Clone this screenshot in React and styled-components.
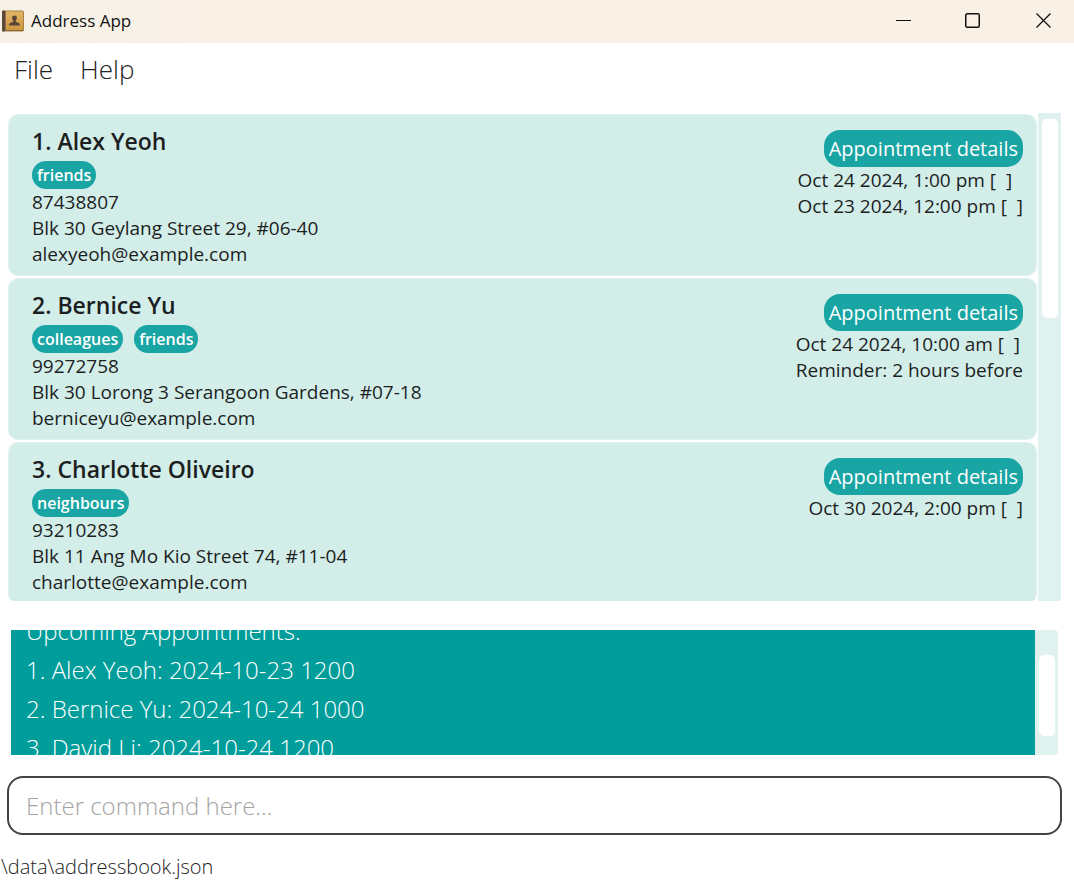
import React, { useLayoutEffect, useRef } from "react";
import styled, { createGlobalStyle } from "styled-components";

const GlobalStyle = createGlobalStyle`
  * { box-sizing: border-box; }
  body {
    margin: 0;
    background: #fff;
    color: #1c1f1f;
    font-family: "Open Sans", "Noto Sans", sans-serif;
  }
`;

const Window = styled.div`
  display: flex;
  flex-direction: column;
  height: 100vh;
  overflow: hidden;
`;

const TitleBar = styled.header`
  display: flex;
  align-items: center;
  flex: none;
  height: 43px;
  padding: 0 0 2px 2px;
  background: linear-gradient(90deg, #f6f2e7, #f9f0e6 200px);
`;

const Title = styled.h1`
  flex: 1;
  margin: 0 0 0 7px;
  font-size: 17px;
  font-weight: 400;
  line-height: 24px;
  color: #111;
`;

const WindowButton = styled.button`
  display: flex;
  align-items: center;
  justify-content: center;
  width: 70px;
  height: 41px;
  padding: 0;
  border: 0;
  background: none;
`;

const WindowControls = styled.div`
  display: flex;
  margin-right: -4px;
`;

const MenuBar = styled.nav`
  display: flex;
  flex: none;
  gap: 27px;
  padding: 7px 14px 0;
  height: 70px;
`;

const MenuButton = styled.button`
  height: 38px;
  padding: 0;
  border: 0;
  background: none;
  color: #222;
  font: 300 26px/38px "Open Sans", "Noto Sans", sans-serif;
`;

const ListPane = styled.main`
  display: flex;
  flex: 1;
  min-height: 0;
  padding: 0 13px 0 8px;
  gap: 1px;
`;

const PersonList = styled.ol`
  flex: 1;
  min-width: 0;
  margin: 0;
  padding: 1px 0 0;
  overflow: hidden;
  list-style: none;
  border-radius: 0 0 6px 6px;
`;

const PersonCard = styled.li`
  display: flex;
  justify-content: space-between;
  height: 162px;
  margin-bottom: 2px;
  padding: 12px 13px 8px 23px;
  border: 1px solid #e0f3f0;
  border-radius: 10px;
  background: #d3ede9;
  font-size: 19px;
  line-height: 26px;
`;

const Details = styled.div`
  display: flex;
  flex-direction: column;
`;

const Name = styled.h2`
  margin: 0 0 6px;
  font-size: 23px;
  font-weight: 600;
  line-height: 28px;
`;

const Tags = styled.div`
  display: flex;
  gap: 11px;
`;

const Tag = styled.span`
  padding: 0 5px;
  border-radius: 14px;
  background: #18a5a3;
  color: #fff;
  font-size: 16px;
  font-weight: 600;
  line-height: 28px;
`;

const Appointments = styled.div`
  display: flex;
  flex-direction: column;
  padding-top: 3px;
`;

const AppointmentButton = styled.button`
  align-self: flex-end;
  height: 37px;
  padding: 0 5px;
  border: 0;
  border-radius: 16px;
  background: #18a5a3;
  color: #fff;
  font: 400 20px/37px "Open Sans", "Noto Sans", sans-serif;
`;

const AppointmentLine = styled.span`
  white-space: pre;
`;

const Track = styled.div`
  flex: none;
  width: 23px;
  padding: ${(p) => p.$offset}px 3px 0 4px;
  border-radius: ${(p) => (p.$rounded ? "0 4px 4px 0" : "0")};
  background: #dff2ef;
`;

const Thumb = styled.div`
  width: 16px;
  height: ${(p) => p.$length}px;
  border-radius: 5px;
  background: #fff;
`;

const ResultPane = styled.section`
  display: flex;
  flex: none;
  height: 125px;
  margin: 29px 16px 0 11px;
`;

const ResultText = styled.div`
  flex: 1;
  min-width: 0;
  padding: 0 15px;
  overflow: hidden;
  background: #009d9b;
  color: #fff;
  font-size: 24px;
  font-weight: 300;
  line-height: 39px;
`;

const ResultLine = styled.p`
  margin: 0;
`;

const CommandInput = styled.input`
  flex: none;
  height: 59px;
  margin: 21px 12px 0 7px;
  padding: 0 17px;
  border: 2px solid #444;
  border-radius: 16px;
  background: #fff;
  color: #222;
  font: 300 24px/36px "Open Sans", "Noto Sans", sans-serif;
  &::placeholder { color: #a4a4a4; opacity: 1; }
`;

const StatusBar = styled.footer`
  flex: none;
  height: 45px;
  padding: 19px 1px 0;
  color: #222;
  font-size: 20px;
  font-weight: 300;
  line-height: 26px;
`;

const people = [
  {
    name: "Alex Yeoh",
    tags: ["friends"],
    phone: "87438807",
    address: "Blk 30 Geylang Street 29, #06-40",
    email: "alexyeoh@example.com",
    appointments: ["Oct 24 2024, 1:00 pm [  ]", "Oct 23 2024, 12:00 pm [  ]"],
  },
  {
    name: "Bernice Yu",
    tags: ["colleagues", "friends"],
    phone: "99272758",
    address: "Blk 30 Lorong 3 Serangoon Gardens, #07-18",
    email: "berniceyu@example.com",
    appointments: ["Oct 24 2024, 10:00 am [  ]", "Reminder: 2 hours before"],
  },
  {
    name: "Charlotte Oliveiro",
    tags: ["neighbours"],
    phone: "93210283",
    address: "Blk 11 Ang Mo Kio Street 74, #11-04",
    email: "charlotte@example.com",
    appointments: ["Oct 30 2024, 2:00 pm [  ]"],
  },
];

const results = [
  "Upcoming Appointments:",
  "1. Alex Yeoh: 2024-10-23 1200",
  "2. Bernice Yu: 2024-10-24 1000",
  "3. David Li: 2024-10-24 1200",
];

function BookIcon() {
  return (
    <svg width="22" height="22" viewBox="0 0 22 22" aria-hidden="true">
      <defs>
        <linearGradient id="cover" x1="0" y1="0" x2="0" y2="1">
          <stop offset="0" stopColor="#e3b565" />
          <stop offset="1" stopColor="#cd9440" />
        </linearGradient>
      </defs>
      <rect x="0.5" y="1" width="21" height="20" rx="1" fill="url(#cover)" stroke="#a98249" />
      <rect x="0" y="0.5" width="3" height="21" rx="1" fill="#5f4a3a" />
      <rect x="3" y="1" width="1" height="20" fill="#8d7153" />
      <path d="M4 20.5h17.5" stroke="#8b6a3c" />
      <path
        d="M12.5 5.500c-1.500 0-2.400 1-2.400 2.400 0 1.200.6 2 1.200 2.600v1.500c-1.300.3-4.300.5-4.300 3.500h11c0-3-3-3.200-4.300-3.500v-1.500c.6-.6 1.200-1.400 1.200-2.600 0-1.400-.9-2.400-2.400-2.400z"
        fill="#574638"
      />
    </svg>
  );
}

function ControlIcon({ children }) {
  return (
    <svg width="17" height="17" viewBox="0 0 17 17" fill="none" stroke="#111" aria-hidden="true">
      {children}
    </svg>
  );
}

function Person({ person, index }) {
  return (
    <PersonCard>
      <Details>
        <Name>{index}. {person.name}</Name>
        <Tags>
          {person.tags.map((tag) => <Tag key={tag}>{tag}</Tag>)}
        </Tags>
        <span>{person.phone}</span>
        <span>{person.address}</span>
        <span>{person.email}</span>
      </Details>
      <Appointments>
        <AppointmentButton type="button">Appointment details</AppointmentButton>
        {person.appointments.map((line) => (
          <AppointmentLine key={line}>{line}</AppointmentLine>
        ))}
      </Appointments>
    </PersonCard>
  );
}

export default function App() {
  const resultRef = useRef(null);

  useLayoutEffect(() => {
    resultRef.current.scrollTop = 19;
  }, []);

  return (
    <Window>
      <GlobalStyle />
      <TitleBar>
        <BookIcon />
        <Title>Address App</Title>
        <WindowControls>
          <WindowButton type="button" aria-label="Minimize">
            <ControlIcon><path d="M1 8.500h15" /></ControlIcon>
          </WindowButton>
          <WindowButton type="button" aria-label="Maximize">
            <ControlIcon><rect x="0.750" y="1.750" width="13.500" height="13.500" rx="1.500" strokeWidth="1.500" /></ControlIcon>
          </WindowButton>
          <WindowButton type="button" aria-label="Close">
            <ControlIcon><path d="M1.500 1.500l14 14M15.500 1.500l-14 14" strokeWidth="1.300" /></ControlIcon>
          </WindowButton>
        </WindowControls>
      </TitleBar>
      <MenuBar>
        <MenuButton type="button">File</MenuButton>
        <MenuButton type="button">Help</MenuButton>
      </MenuBar>
      <ListPane>
        <PersonList>
          {people.map((person, i) => (
            <Person key={person.name} person={person} index={i + 1} />
          ))}
        </PersonList>
        <Track $offset={6}><Thumb $length={199} /></Track>
      </ListPane>
      <ResultPane>
        <ResultText ref={resultRef}>
          {results.map((line) => <ResultLine key={line}>{line}</ResultLine>)}
        </ResultText>
        <Track $offset={25} $rounded><Thumb $length={81} /></Track>
      </ResultPane>
      <CommandInput type="text" aria-label="Command" placeholder="Enter command here..." />
      <StatusBar>\data\addressbook.json</StatusBar>
    </Window>
  );
}
